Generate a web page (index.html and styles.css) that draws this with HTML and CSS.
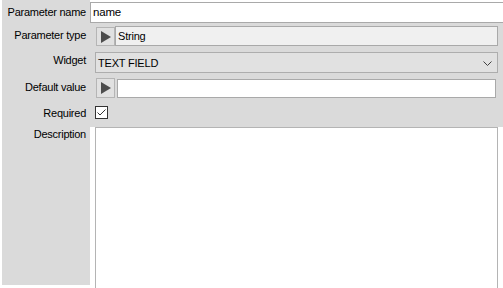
FILE: index.html
```html
<!DOCTYPE html>
<html>
<head>
<meta charset="utf-8">
<link rel="stylesheet" href="styles.css">
</head>
<body>
<div class="form">
  <div class="lbl r1">Parameter name</div>
  <div class="cell r1 white">
    <div class="name-field">name</div>
  </div>

  <div class="lbl r2">Parameter type</div>
  <div class="cell r2">
    <div class="btn"><svg width="10" height="12" viewBox="0 0 10 12"><polygon points="0,0 10,6 0,12" fill="#4d4d4d"/></svg></div>
    <div class="type-field">String</div>
  </div>

  <div class="lbl r3">Widget</div>
  <div class="cell r3">
    <div class="combo"><span>TEXT FIELD</span>
      <svg class="chev" width="9" height="5" viewBox="0 0 9 5"><polyline points="0.5,0.5 4.5,4.5 8.5,0.5" fill="none" stroke="#404040" stroke-width="1"/></svg>
    </div>
  </div>

  <div class="lbl r4">Default value</div>
  <div class="cell r4">
    <div class="btn btn2"><svg width="10" height="12" viewBox="0 0 10 12"><polygon points="0,0 10,6 0,12" fill="#4d4d4d"/></svg></div>
    <div class="def-field"></div>
  </div>

  <div class="lbl r5">Required</div>
  <div class="cell r5">
    <div class="check"><svg width="11" height="11" viewBox="0 0 11 11"><polyline points="1.5,5.5 4,8 9.5,2.5" fill="none" stroke="#333" stroke-width="1"/></svg></div>
  </div>

  <div class="lbl r6">Description</div>
  <div class="cell r6">
    <div class="desc"></div>
  </div>
</div>
</body>
</html>
```
FILE: styles.css
```css
html, body {
  margin: 0;
  padding: 0;
  background: #ffffff;
  width: 503px;
  height: 288px;
  overflow: hidden;
  font-family: "Liberation Sans", sans-serif;
  font-size: 11px;
  color: #000;
}
.form {
  margin-left: 2px;
  width: 501px;
  display: grid;
  grid-template-columns: 88px 413px;
  grid-template-rows: 23px 26px 26px 26px 23px 164px;
}
.lbl {
  box-sizing: border-box;
  background: #dadada;
  text-align: right;
  padding-right: 4px;
  line-height: 13px;
  white-space: nowrap;
  font-size: 11px;
  letter-spacing: -0.25px;
}
.lbl.r1 { padding-top: 6px; }
.lbl.r2 { padding-top: 6px; }
.lbl.r3 { padding-top: 5px; }
.lbl.r4 { padding-top: 6px; }
.lbl.r5 { padding-top: 6px; }
.lbl.r6 { padding-top: 4px; height: 161px; align-self: start; }
.cell {
  background: #dadada;
  display: flex;
  align-items: flex-start;
  letter-spacing: -0.2px;
}
.cell.white { background: #ffffff; }
.name-field {
  margin-top: 2px;
  height: 19px;
  flex: 1;
  border-top: 1px solid #a9a9a9;
  border-bottom: 1px solid #a9a9a9;
  border-left: 1px solid #a9a9a9;
  padding-left: 2px;
  line-height: 19px;
  font-size: 11.5px;
}
.btn {
  width: 17px;
  height: 17px;
  margin-top: 4px;
  margin-left: 6px;
  background: #e1e1e1;
  border: 1px solid #b5b5b5;
  display: flex;
  align-items: center;
  justify-content: center;
}
.btn svg { margin-left: 1px; }
.type-field {
  margin-top: 3px;
  margin-right: 5px;
  flex: 1;
  height: 18px;
  background: #f0f0f0;
  border: 1px solid #a9a9a9;
  padding-left: 2px;
  line-height: 18px;
}
.combo {
  margin-top: 3px;
  margin-left: 5px;
  margin-right: 5px;
  flex: 1;
  height: 19px;
  background: #e1e1e1;
  border: 1px solid #adadad;
  display: flex;
  align-items: center;
  justify-content: space-between;
  padding-left: 2px;
  padding-right: 5px;
}
.chev { margin-top: 1px; }
.btn2 { margin-top: 3px; height: 18px; }
.def-field {
  margin-top: 4px;
  margin-left: 2px;
  margin-right: 7px;
  flex: 1;
  height: 17px;
  background: #ffffff;
  border: 1px solid #a9a9a9;
}
.check {
  margin-top: 5px;
  margin-left: 5px;
  width: 11px;
  height: 11px;
  background: #ffffff;
  border: 1px solid #333333;
}
.check svg { display: block; }
.cell.r6 {
  background: #ffffff;
  border-top: 3px solid #dadada;
}
.desc {
  margin-left: 5px;
  margin-right: 5px;
  flex: 1;
  height: 170px;
  background: #ffffff;
  border: 1px solid #b4b4b4;
}
```
